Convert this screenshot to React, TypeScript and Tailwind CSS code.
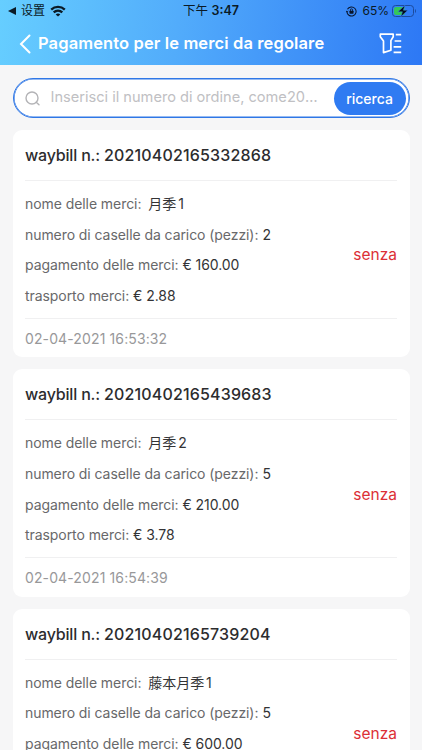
import { useState } from 'react';

interface Waybill {
  id: string;
  goods: string;
  quantity: number;
  pieces: number;
  payment: string;
  transport: string;
  status: string;
  createdAt: string;
}

const waybills: Waybill[] = [
  {
    id: '20210402165332868',
    goods: '月季',
    quantity: 1,
    pieces: 2,
    payment: '160.00',
    transport: '2.88',
    status: 'senza',
    createdAt: '02-04-2021 16:53:32',
  },
  {
    id: '20210402165439683',
    goods: '月季',
    quantity: 2,
    pieces: 5,
    payment: '210.00',
    transport: '3.78',
    status: 'senza',
    createdAt: '02-04-2021 16:54:39',
  },
  {
    id: '20210402165739204',
    goods: '藤本月季',
    quantity: 1,
    pieces: 5,
    payment: '600.00',
    transport: '10.80',
    status: 'senza',
    createdAt: '02-04-2021 16:57:39',
  },
];

function WifiIcon() {
  return (
    <svg width="16" height="12" viewBox="0 0 16 12" fill="none" stroke="#0a1a26" strokeWidth="2.3">
      <path d="M1.2 4.6C5 .9 11 .9 14.8 4.6" />
      <path d="M3.7 7.4c2.5-2.3 6.1-2.3 8.6 0" />
      <path d="M8 11.6 5.7 9.4c1.3-1.2 3.3-1.2 4.6 0z" fill="#0a1a26" stroke="none" />
    </svg>
  );
}

function RotationLockIcon() {
  return (
    <svg width="11" height="11" viewBox="0 0 12 12" fill="none" stroke="#07142b">
      <path d="M1.6 3.6A5 5 0 1 1 1 6" strokeWidth="1.1" />
      <path d="M.1 5.1 1 6.7l1.5-1.2" strokeWidth=".9" />
      <path d="M4.8 5.5V4.3a1.2 1.2 0 0 1 2.4 0v1.2" strokeWidth=".9" />
      <rect x="3.8" y="5.2" width="4.4" height="3.2" rx=".5" fill="#07142b" stroke="none" />
    </svg>
  );
}

function BatteryIcon() {
  return (
    <svg width="25" height="12" viewBox="0 0 25 12" fill="none">
      <rect x=".5" y=".5" width="21" height="11" rx="3" stroke="#1c4a9c" />
      <path d="M23 4v4c1.3-.5 1.3-3.5 0-4z" fill="#1c4a9c" />
      <path d="M4 2h8.5v8H4a2 2 0 0 1-2-2V4a2 2 0 0 1 2-2z" fill="#35c759" />
      <path d="M12.9.2 6 6.8h4.4L8.8 11.8l7-6.6h-4.4z" fill="#050b18" stroke="#3b86f0" strokeWidth=".5" />
    </svg>
  );
}

function StatusBar() {
  return (
    <div className="grid h-[22px] grid-cols-3 items-center px-2 text-[#0a1a26]">
      <div className="flex items-center">
        <svg width="8" height="8" viewBox="0 0 8 8" fill="#0a1a26">
          <path d="M8 0v8L0 4z" />
        </svg>
        <span className="ml-[5px] text-[12px] leading-none">设置</span>
        <span className="ml-[5px]">
          <WifiIcon />
        </span>
      </div>
      <div className="text-center text-[12.5px] leading-none whitespace-nowrap">
        下午 <span className="font-semibold">3:47</span>
      </div>
      <div className="-mr-[3px] flex items-center justify-end">
        <RotationLockIcon />
        <span className="ml-[5px] text-[12px] leading-none">65%</span>
        <span className="ml-[3px]">
          <BatteryIcon />
        </span>
      </div>
    </div>
  );
}

function Header() {
  return (
    <header className="h-[65px] shrink-0 bg-[linear-gradient(97deg,#66ceff_0%,#52acfb_42%,#2d78f5_100%)]">
      <StatusBar />
      <div className="flex h-[43px] items-center pl-[19px] pr-[20px] text-white">
        <button aria-label="Indietro">
          <svg width="12" height="20" viewBox="0 0 12 20" fill="none" stroke="currentColor" strokeWidth="2">
            <path d="M10.5 1.5 2 10l8.5 8.5" strokeLinecap="round" />
          </svg>
        </button>
        <h1 className="ml-[7px] flex-1 text-[16.5px] font-semibold leading-none tracking-[0.12px] whitespace-nowrap">
          Pagamento per le merci da regolare
        </h1>
        <button aria-label="Filtra">
          <svg width="23" height="21" viewBox="0 0 23 21" fill="none" stroke="currentColor" strokeWidth="1.7">
            <path d="M1.3 1.2h12.9v2.6L11.9 7.6v9.6l-7.4 2.4V8L1.3 3.8z" strokeLinejoin="round" />
            <path d="M16.8 1.6h5.4M15.6 8h6.6M14.6 13.8h7.6M14.6 19.4h7.6" />
          </svg>
        </button>
      </div>
    </header>
  );
}

function SearchBar() {
  const [query, setQuery] = useState('');

  return (
    <div className="flex h-[40px] shrink-0 items-center rounded-full border border-[#2f77e6] bg-white pl-[11px] pr-[3px] shadow-[inset_0_0_0_0.6px_#2f77e6]">
      <svg width="15" height="15" viewBox="0 0 15 15" fill="none" stroke="#b3b3b6" strokeWidth="1.4">
        <circle cx="7" cy="7" r="6" />
        <path d="m11.2 11.2 2.8 2.6" strokeLinecap="round" />
      </svg>
      <input
        value={query}
        onChange={(e) => setQuery(e.target.value)}
        placeholder="Inserisci il numero di ordine, come20210402165332868"
        className="ml-[11px] w-[270px] text-ellipsis text-[14.6px] outline-none placeholder:text-[#c0c0c3]"
      />
      <button className="ml-auto h-[33px] w-[72px] rounded-full bg-[#2f7bf2] text-[14px] font-medium text-white">
        ricerca
      </button>
    </div>
  );
}

interface RowProps {
  label: string;
  children: React.ReactNode;
}

function Row({ label, children }: RowProps) {
  return (
    <div className="flex h-[30.7px] items-center gap-[4px] whitespace-nowrap text-[14px] tracking-[-0.07px]">
      <span className="text-[#68686a]">{label}</span>
      <span className="text-[#333335]">{children}</span>
    </div>
  );
}

function WaybillCard({ waybill }: { waybill: Waybill }) {
  return (
    <article className="flex h-[227.4px] shrink-0 flex-col rounded-[9px] bg-white px-[12.5px]">
      <h2 className="flex h-[51px] items-center gap-[4px] border-b border-[#f0f0f1] text-[16px] font-medium text-[#2c2c2e]">
        <span className="tracking-[-0.18px]">waybill n.:</span>
        <span className="tracking-[0.16px]">{waybill.id}</span>
      </h2>
      <div className="flex h-[138px] items-center justify-between border-b border-[#f0f0f1]">
        <div>
          <Row label="nome delle merci:">
            <span className="ml-[3px] mr-[2px]">{waybill.goods}</span>
            {waybill.quantity}
          </Row>
          <Row label="numero di caselle da carico (pezzi):">{waybill.pieces}</Row>
          <Row label="pagamento delle merci:">€ {waybill.payment}</Row>
          <Row label="trasporto merci:">€ {waybill.transport}</Row>
        </div>
        <span className="pt-[11px] text-[15.5px] text-[#dc2f36]">{waybill.status}</span>
      </div>
      <time className="flex flex-1 items-center text-[14px] tracking-[0.12px] text-[#98989a]">{waybill.createdAt}</time>
    </article>
  );
}

export default function App() {
  return (
    <div className="flex h-[750px] w-full flex-col overflow-hidden bg-[#f6f6f7] font-['Inter','Noto_Sans_CJK_SC',sans-serif]">
      <Header />
      <main className="flex flex-1 flex-col gap-[12px] overflow-hidden px-[12.5px] pt-[13px]">
        <SearchBar />
        {waybills.map((waybill) => (
          <WaybillCard key={waybill.id} waybill={waybill} />
        ))}
      </main>
    </div>
  );
}
